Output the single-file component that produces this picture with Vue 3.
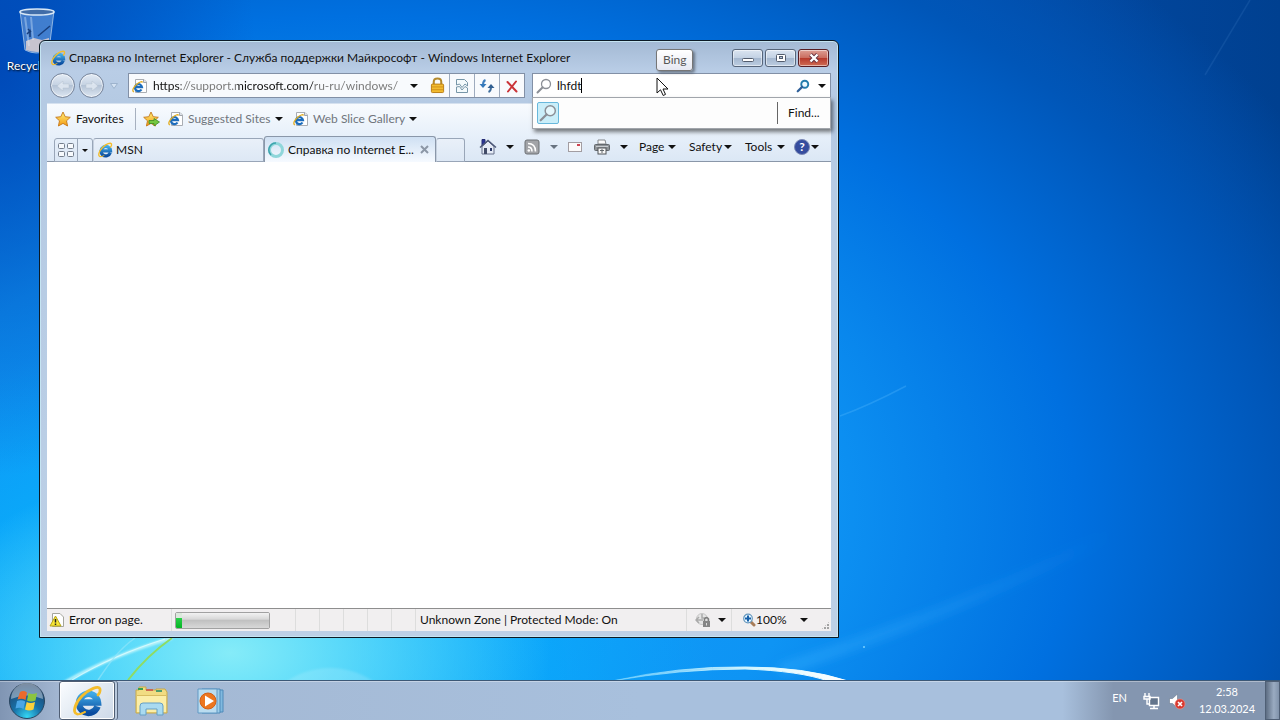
<script setup>
import { ref } from 'vue'

const address = ref('https://support.microsoft.com/ru-ru/windows/')
const query = ref('lhfdt')
const progress = ref(6)
const statusCells = 5
</script>

<template>
  <div class="screen">
    <svg class="defs" width="0" height="0" aria-hidden="true">
      <defs>
        <linearGradient id="eBlue" x1="0" y1="0" x2="0" y2="1">
          <stop offset="0" stop-color="#3fa9e6" />
          <stop offset="1" stop-color="#0a4c9f" />
        </linearGradient>
        <linearGradient id="gold" x1="0" y1="0" x2="0" y2="1">
          <stop offset="0" stop-color="#fff07a" />
          <stop offset="1" stop-color="#f39a12" />
        </linearGradient>
        <symbol id="ie" viewBox="0 0 32 32">
          <path d="M26.500 21.500A9.500 9.500 0 1 1 27 17.500H11" fill="none" stroke="url(#eBlue)" stroke-width="6.500" />
          <path d="M6 29C1 28 4 18 11 11C18 4 28 0 29 4C29.500 6 28 9 27 10" fill="none" stroke="#f4bd2c" stroke-width="2.800" stroke-linecap="round" />
          <path d="M6 29C9 30 12 28 14 27" fill="none" stroke="#f4bd2c" stroke-width="2" stroke-linecap="round" />
        </symbol>
        <symbol id="iepage" viewBox="0 0 16 16">
          <path d="M3.500 1.500H12L14.500 4V14.500H3.500Z" fill="#fff" stroke="#a9adb3" />
          <path d="M11.500 1.500V4.500H14.500" fill="#dde2ea" stroke="#a0a5ad" />
          <path d="M9.500 11.500A3.500 3.500 0 1 1 10 9.200H4" fill="none" stroke="#1c6cbc" stroke-width="2.200" />
          <path d="M2 14C-.5 13 1.500 9 4.500 6.500C7 4 10 3 10.500 4.500" fill="none" stroke="#e2ae25" stroke-width="1.300" />
        </symbol>
        <symbol id="star" viewBox="0 0 16 16">
          <path d="M8 1L10.200 5.700L15.300 6.300L11.500 9.800L12.600 15L8 12.400L3.400 15L4.500 9.800L.700 6.300L5.800 5.700Z" fill="url(#gold)" stroke="#c4771a" stroke-width=".9" />
        </symbol>
        <symbol id="lens" viewBox="0 0 16 16">
          <circle cx="10" cy="6" r="4.500" fill="#fff" fill-opacity=".5" stroke="currentColor" stroke-width="1.300" />
          <path d="M6.700 9.300L1.500 14.500" stroke="currentColor" stroke-width="2" stroke-linecap="round" />
        </symbol>
      </defs>
    </svg>

    <main class="desktop">
      <svg class="streaks" viewBox="0 0 1280 680" preserveAspectRatio="none" aria-hidden="true">
        <defs>
          <filter id="soft"><feGaussianBlur stdDeviation="1.200" /></filter>
          <filter id="wide"><feGaussianBlur stdDeviation="4" /></filter>
          <linearGradient id="beam" x1="0" y1="0" x2="1" y2="0">
            <stop offset="0" stop-color="#3ab0ff" stop-opacity=".4" />
            <stop offset="1" stop-color="#3ab0ff" stop-opacity="0" />
          </linearGradient>
          <linearGradient id="arc" x1="0" y1="0" x2="1" y2="0">
            <stop offset="0" stop-color="#9fe6ff" stop-opacity=".4" />
            <stop offset=".6" stop-color="#d6f6ff" />
            <stop offset="1" stop-color="#fff" />
          </linearGradient>
        </defs>
        <path d="M780 670C900 630 1000 590 1110 535" fill="none" stroke="url(#beam)" stroke-width="12" filter="url(#wide)" />
        <path d="M840 416C865 407 885 397 906 386" fill="none" stroke="#5dbcff" stroke-opacity=".3" stroke-width="1.500" />
        <path d="M1205 75L1250 0" stroke="#5d9ce0" stroke-opacity=".15" stroke-width="1.500" />
        <path d="M612 681Q680 666 745 667Q805 667 848 681H828Q800 671 745 669Q680 669 612 681Z" fill="url(#arc)" stroke="url(#arc)" stroke-width="1" />
        <path d="M65 682C95 665 130 650 172 638" fill="none" stroke="#c8f7fb" stroke-width="2.500" filter="url(#soft)" />
        <path d="M72 680C100 663 130 650 165 639" fill="none" stroke="#e8ffff" stroke-opacity=".7" stroke-width="1.200" />
        <path d="M98 680C108 665 118 650 135 638" fill="none" stroke="#8fe4fa" stroke-opacity=".7" stroke-width="1.500" />
        <path d="M128 680C142 662 155 650 172 638" fill="none" stroke="#8fdc62" stroke-width="2" />
        <ellipse cx="330" cy="730" rx="70" ry="62" fill="#fff" fill-opacity=".14" filter="url(#soft)" />
        <circle cx="864" cy="647" r="1" fill="#7ad0ff" />
      </svg>

      <a class="bin" href="#recycle">
        <svg width="38" height="46" viewBox="0 0 38 46" aria-hidden="true">
          <path d="M2 3L7 42Q18 48 31 42L36 3Z" fill="#9fc2e8" fill-opacity=".4" stroke="#bcd5ee" stroke-opacity=".7" />
          <path d="M8 33L16 30L24 32L31 30L30 42Q19 46 8 42Z" fill="#e9d5d0" fill-opacity=".8" />
          <ellipse cx="19" cy="4" rx="17" ry="3" fill="#416da8" stroke="#d8e8f6" stroke-width="1.500" />
          <path d="M7 9L11 38M13 9L15 32" stroke="#e6f3ff" stroke-opacity=".35" stroke-width="2" />
          <path d="M12 29V23L9 26M10 21L13 24M20 28L32 18" fill="none" stroke="#173e7c" stroke-width="1.500" />
        </svg>
        <span>Recycle Bin</span>
      </a>

      <section class="window" aria-label="Windows Internet Explorer">
        <header class="titlebar">
          <svg width="16" height="16" aria-hidden="true"><use href="#ie" /></svg>
          <h1>Справка по Internet Explorer - Служба поддержки Майкрософт - Windows Internet Explorer</h1>
          <div class="winbtns">
            <button type="button" aria-label="Minimize">
              <svg width="14" height="12" aria-hidden="true"><rect x="1.500" y="6.500" width="11" height="3" rx="1" fill="#fff" stroke="#525c6d" /></svg>
            </button>
            <button type="button" aria-label="Maximize">
              <svg width="14" height="12" aria-hidden="true"><rect x="2.500" y="2.500" width="9" height="7" rx="1" fill="#fff" stroke="#525c6d" /><rect x="5.500" y="4.500" width="3" height="2" fill="#b7c7dc" stroke="#525c6d" /></svg>
            </button>
            <button type="button" class="close" aria-label="Close">
              <svg width="14" height="12" aria-hidden="true"><path d="M3.500 2.500L10.500 9.500M10.500 2.500L3.500 9.500" stroke="#603040" stroke-width="4" /><path d="M3.500 2.500L10.500 9.500M10.500 2.500L3.500 9.500" stroke="#fff" stroke-width="2.400" /></svg>
            </button>
          </div>
          <div class="tooltip" role="tooltip">Bing</div>
        </header>

        <nav class="navrow">
          <div class="travel">
            <button type="button" class="orb" aria-label="Back">
              <svg width="16" height="16" viewBox="0 0 16 16" aria-hidden="true"><path d="M2 8L8 3V6H14V10H8V13Z" fill="#e4ebf4" fill-opacity=".8" stroke="#b4c0cf" stroke-width=".5" /></svg>
            </button>
            <button type="button" class="orb" aria-label="Forward">
              <svg width="16" height="16" viewBox="0 0 16 16" aria-hidden="true"><path d="M14 8L8 3V6H2V10H8V13Z" fill="#e4ebf4" fill-opacity=".8" stroke="#b4c0cf" stroke-width=".5" /></svg>
            </button>
            <button type="button" class="recent" aria-label="Recent pages">
              <svg width="10" height="8" aria-hidden="true"><path d="M1.500 1.500H8.500L5 6.500Z" fill="#d5e3f3" stroke="#9db3cd" /></svg>
            </button>
          </div>
          <div class="address">
            <svg width="16" height="16" aria-hidden="true"><use href="#iepage" /></svg>
            <input v-model="address" type="text" aria-label="Address">
            <button type="button" class="drop" aria-label="Address history"><i class="caret"></i></button>
            <button type="button" class="lock" aria-label="Security report">
              <svg width="15" height="17" viewBox="0 0 16 18" aria-hidden="true"><path d="M4 8V5Q4 1.500 8 1.500Q12 1.500 12 5V8" fill="none" stroke="#b48a2c" stroke-width="2.200" /><rect x="1.500" y="7.500" width="13" height="9" rx="1" fill="#f2bc31" stroke="#b97b12" /><path d="M2 10.500H14M2 13.500H14" stroke="#cf8f1b" /></svg>
            </button>
            <button type="button" class="cell" aria-label="Compatibility view">
              <svg width="14" height="16" viewBox="0 0 14 16" aria-hidden="true"><path d="M1.500 7V1.500H9.500L12.500 4.500V8L10 6L7 9.500L4.500 6Z" fill="#f4fafc" stroke="#7796a8" /><path d="M1.500 9L4.500 8.500L7 12L10 8.500L12.500 10V14.500H1.500Z" fill="#f4fafc" stroke="#7796a8" /></svg>
            </button>
            <button type="button" class="cell" aria-label="Refresh">
              <svg width="16" height="16" viewBox="0 0 16 16" aria-hidden="true"><path d="M6.500 2Q4 3 4 7" fill="none" stroke="#3f7fbe" stroke-width="2" /><path d="M.5 6H7.500L4 10Z" fill="#3478ba" /><path d="M9.500 14Q12 13 12 9" fill="none" stroke="#3d6c9c" stroke-width="2" /><path d="M8.500 10H15.500L12 6Z" fill="#315f91" /></svg>
            </button>
            <button type="button" class="cell" aria-label="Stop">
              <svg width="14" height="14" viewBox="0 0 14 14" aria-hidden="true"><path d="M2.500 3L11.500 12.500M11 2.500L3 12.500" stroke="#ca3338" stroke-width="2" stroke-linecap="round" /></svg>
            </button>
          </div>
          <div class="search">
            <svg class="gray" width="16" height="18" viewBox="0 0 16 16" aria-hidden="true"><use href="#lens" /></svg>
            <input v-model="query" type="text" aria-label="Search Bing"><span class="beam"></span>
            <button type="button" class="go" aria-label="Search"><svg width="14" height="14" viewBox="0 0 16 16" aria-hidden="true"><circle cx="10" cy="6" r="4" fill="#eefaff" stroke="#237cac" stroke-width="2.200" /><path d="M7 9L2 14" stroke="#2e5f99" stroke-width="2.500" stroke-linecap="round" /></svg></button>
            <button type="button" class="drop" aria-label="Search options"><i class="caret"></i></button>
            <div class="suggest">
              <button type="button" class="provider" aria-label="Bing"><svg width="18" height="18" viewBox="0 0 16 16" aria-hidden="true"><use href="#lens" /></svg></button>
              <button type="button" class="find">Find...</button>
            </div>
          </div>
        </nav>

        <div class="favorites">
          <button type="button" class="favmain"><svg width="16" height="16" aria-hidden="true"><use href="#star" /></svg>Favorites</button>
          <button type="button" class="addfav" aria-label="Add to Favorites Bar">
            <svg width="18" height="16" viewBox="0 0 18 16" aria-hidden="true"><use href="#star" width="16" height="16" /><path d="M6 9.500H11V7.500L16.500 11L11 15V12.500H6Z" fill="#74c840" stroke="#3b8c25" stroke-width=".8" /></svg>
          </button>
          <button type="button" class="slice sites"><svg width="16" height="16" aria-hidden="true"><use href="#iepage" /></svg>Suggested Sites<i class="caret"></i></button>
          <button type="button" class="slice"><svg width="16" height="16" aria-hidden="true"><use href="#iepage" /></svg>Web Slice Gallery<i class="caret"></i></button>
        </div>

        <div class="tabrow">
          <div class="quick">
            <button type="button" aria-label="Quick Tabs"><svg width="16" height="14" aria-hidden="true"><g fill="#f7fafd" stroke="#747e8c"><rect x=".5" y=".5" width="6" height="5" rx="1" /><rect x="9.500" y=".5" width="6" height="5" rx="1" /><rect x=".5" y="8.500" width="6" height="5" rx="1" /><rect x="9.500" y="8.500" width="6" height="5" rx="1" /></g></svg></button>
            <button type="button" aria-label="Tab list"><i class="caret small"></i></button>
          </div>
          <button type="button" class="tab"><svg width="16" height="16" aria-hidden="true"><use href="#ie" /></svg>MSN</button>
          <div class="tab active">
            <svg width="18" height="18" viewBox="0 0 18 18" aria-hidden="true"><circle cx="9" cy="9" r="6.500" fill="none" stroke="#8fd6da" stroke-width="3" /><path d="M9 2A7 7 0 0 0 4 14" fill="none" stroke="#3da3ad" stroke-width="1.500" /></svg>
            <button type="button" class="label">Справка по Internet E...</button>
            <button type="button" class="x" aria-label="Close tab"><svg width="9" height="9" aria-hidden="true"><path d="M1 1L8 8M8 1L1 8" stroke="#8c97a6" stroke-width="2" /></svg></button>
          </div>
          <button type="button" class="tab newtab" aria-label="New tab"></button>
          <div class="commands">
            <button type="button" class="icon wide" aria-label="Home">
              <svg width="18" height="18" viewBox="0 0 18 18" aria-hidden="true"><path d="M3 1.500H6V6L3 8Z" fill="#2a3596" stroke="#252c74" /><path d="M3 8.500L9 3L15 8.500V16H3Z" fill="#e5ebf6" stroke="#66708a" /><path d="M1 9.500L9 2.500L17 9.500" fill="none" stroke="#4d5878" stroke-width="1.500" /><rect x="5" y="10" width="3" height="6" fill="#414b67" /><rect x="11" y="10" width="2" height="3" fill="#2b3967" /></svg>
              <i class="caret"></i>
            </button>
            <button type="button" class="icon feed" aria-label="Feeds">
              <svg width="16" height="16" viewBox="0 0 16 16" aria-hidden="true"><rect x="1" y="1" width="14" height="14" rx="2" fill="#a2a4a8" stroke="#6d7074" /><path d="M4 8Q8 8 8 12.500M4 4.500Q11.500 4.500 11.500 12.500" fill="none" stroke="#fff" stroke-width="1.600" /><circle cx="4.800" cy="11.500" r="1.300" fill="#fff" /></svg>
              <i class="caret"></i>
            </button>
            <button type="button" class="icon mail" aria-label="Read mail">
              <svg width="16" height="12" aria-hidden="true"><rect x="1.500" y="1.500" width="13" height="9" fill="#fbfafa" stroke="#a29da2" /><rect x="10" y="3" width="3" height="2" fill="#ce4552" /></svg>
            </button>
            <button type="button" class="icon print" aria-label="Print">
              <svg width="18" height="16" viewBox="0 0 18 16" aria-hidden="true"><path d="M5 1H12L13 5H5Z" fill="#fafafa" stroke="#83878b" /><rect x="1.500" y="5.500" width="15" height="6" rx="1" fill="#8e9397" stroke="#63686d" /><path d="M3 7.500H15" stroke="#c8ccd0" /><rect x="5" y="9" width="8" height="6" fill="#f8f8f8" stroke="#505459" /><path d="M7 11.500H11M9 10V14" stroke="#63686d" /></svg>
              <i class="caret"></i>
            </button>
            <button type="button" class="menu page">Page<i class="caret"></i></button>
            <button type="button" class="menu safety">Safety<i class="caret"></i></button>
            <button type="button" class="menu tools">Tools<i class="caret"></i></button>
            <button type="button" class="menu help" aria-label="Help"><span>?</span><i class="caret"></i></button>
          </div>
        </div>

        <div class="content"></div>

        <footer class="status">
          <div class="error">
            <svg width="16" height="16" viewBox="0 0 16 16" aria-hidden="true"><path d="M3.500 1.500H11L14.500 5V14.500H3.500Z" fill="#fff" stroke="#a5a59c" /><path d="M6.500 4L12 14H1Z" fill="#f8e634" stroke="#b5a51c" stroke-linejoin="round" /><path d="M6.500 7V10.500M6.500 11.500V13" stroke="#222" stroke-width="1.500" /></svg>
            Error on page.
          </div>
          <div class="meter"><progress :value="progress" max="93" aria-label="Page loading"></progress></div>
          <div v-for="n in statusCells" :key="n" class="pane"></div>
          <div class="zone">Unknown Zone | Protected Mode: On</div>
          <button type="button" class="privacy" aria-label="Security settings">
            <svg width="18" height="16" viewBox="0 0 18 16" aria-hidden="true"><circle cx="7" cy="7" r="5.500" fill="#e5e5e5" stroke="#c6c6c6" /><path d="M1 8H8M4 5L1 8L4 11M7 2V6H12" fill="none" stroke="#aaa" stroke-width="1.500" /><path d="M9.500 9V7Q11.500 4 13.500 7V9" fill="none" stroke="#7e7e7e" stroke-width="1.500" /><rect x="8" y="9" width="7" height="6" fill="#858585" /><path d="M11.500 11V13.500" stroke="#ddd" /></svg>
            <i class="caret"></i>
          </button>
          <button type="button" class="zoom">
            <svg width="14" height="14" viewBox="0 0 14 14" aria-hidden="true"><path d="M8.500 8.500L12 12" stroke="#a77c58" stroke-width="3" stroke-linecap="round" /><circle cx="6" cy="5.500" r="4.300" fill="#e9f7ff" stroke="#6597bd" stroke-width="1.200" /><path d="M3 5.500H9M6 2.500V8.500" stroke="#155fa9" stroke-width="2" /></svg>
            <span>100%</span><i class="caret"></i>
          </button>
          <div class="grip"></div>
        </footer>
      </section>

      <svg class="pointer" width="14" height="20" viewBox="0 0 14 20" aria-hidden="true"><path d="M1 1V16L4.500 12.800L7.200 18.500L9.500 17.400L7 12H12Z" fill="#fff" stroke="#111" /></svg>
    </main>

    <footer class="taskbar">
      <button type="button" class="start" aria-label="Start">
        <svg width="38" height="38" viewBox="0 0 38 38" aria-hidden="true">
          <defs>
            <radialGradient id="orbFill" cx=".5" cy=".95" r=".9"><stop offset="0" stop-color="#35d7f4" /><stop offset=".45" stop-color="#1771a8" /><stop offset="1" stop-color="#22436c" /></radialGradient>
          </defs>
          <circle cx="19" cy="19" r="17.500" fill="url(#orbFill)" stroke="#29455f" />
          <path d="M3 17A16 16 0 0 1 35 17Q19 10 3 17Z" fill="#fff" fill-opacity=".4" />
          <path d="M12 10Q15.500 8 19 10.500L17.500 18Q14 16 9.500 17.500Z" fill="#ec6a2b" />
          <path d="M20.500 11Q24 13 29 11L27.500 18.500Q23 20.500 19 18.500Z" fill="#8bc53f" />
          <path d="M9 19Q13.500 17.500 17.200 19.500L15.500 27Q12 25 7.500 26.500Z" fill="#4aa6e6" />
          <path d="M18.700 20Q22.500 22 27 20L25.500 27.500Q21 29.500 17 27.500Z" fill="#fbd13b" />
        </svg>
      </button>
      <button type="button" class="app running" aria-label="Internet Explorer"><svg width="32" height="32" aria-hidden="true"><use href="#ie" /></svg></button>
      <button type="button" class="app" aria-label="Windows Explorer">
        <svg width="34" height="30" viewBox="0 0 34 30" aria-hidden="true"><path d="M2 4H5V1H12V4H22V3H31L33 6V27H2Z" fill="#f1dc82" stroke="#c7a94a" /><path d="M4 2H9V4H4Z" fill="#39a04f" /><path d="M12 4H19" stroke="#cc6850" stroke-width="2" /><path d="M22 5H28" stroke="#4f9d6d" stroke-width="2" /><path d="M3 10H32V26H3Z" fill="#fbeea8" /><path d="M3 9.500H32" stroke="#d9bd60" /><path d="M6 29V20Q6 17 9 17H26Q29 17 29 20V29H23V23H12V29Z" fill="#a9daf0" stroke="#659fc5" /></svg>
      </button>
      <button type="button" class="app" aria-label="Windows Media Player">
        <svg width="30" height="28" viewBox="0 0 30 28" aria-hidden="true"><path d="M9 3H27V25H9Z" fill="#80b9df" stroke="#4e8ab9" /><path d="M6 2H24V26H6Z" fill="#9dcdea" stroke="#4e8ab9" /><path d="M2 2H21V26H2Z" fill="#badcf0" stroke="#6199c4" /><circle cx="12" cy="14" r="8" fill="#ec7620" stroke="#d46016" /><path d="M9 8.500L18 14L9 19.500Z" fill="#fff" /></svg>
      </button>
      <div class="tray">
        <button type="button" class="lang">EN</button>
        <button type="button" aria-label="Network"><svg width="18" height="18" viewBox="0 0 18 18" aria-hidden="true"><path d="M6.500 5.500H15.500V13.500H6.500Z" fill="#63758c" stroke="#fff" stroke-width="1.400" /><path d="M11 14V16M7 16.500H15" stroke="#fff" stroke-width="1.500" /><path d="M2 1V4M6 1V4M1 4.500H7V7H1ZM4 7V12H6" fill="none" stroke="#fff" stroke-width="1.400" /></svg></button>
        <button type="button" aria-label="Volume muted"><svg width="18" height="18" viewBox="0 0 18 18" aria-hidden="true"><path d="M1.500 6.500H4.500L9.500 2V16L4.500 11.500H1.500Z" fill="#fff" stroke="#69798f" stroke-width=".6" /><circle cx="12" cy="12" r="5" fill="#d8392f" stroke="#f0938a" stroke-width=".6" /><path d="M10 10L14 14M14 10L10 14" stroke="#fff" stroke-width="1.600" /></svg></button>
        <button type="button" class="clock"><time>2:58</time><time>12.03.2024</time></button>
      </div>
      <button type="button" class="peek" aria-label="Show desktop"></button>
    </footer>
  </div>
</template>

<style>
body { margin: 0; }
</style>

<style scoped>
.screen {
  display: flex;
  flex-direction: column;
  height: 100vh;
  overflow: hidden;
  font: 12px/16px Lato, "Open Sans", sans-serif;
  color: #111;
}
.screen *, .screen *::before { box-sizing: border-box; }
.defs { position: absolute; }
svg { flex: none; }
button, input {
  margin: 0;
  padding: 0;
  border: 0;
  background: none;
  font: inherit;
  color: inherit;
}
button { display: flex; align-items: center; white-space: nowrap; }
.caret {
  flex: none;
  width: 0;
  height: 0;
  border: 4px solid transparent;
  border-top-color: currentColor;
  border-bottom: 0;
}
.caret.small { border-width: 3px 3px 0; }

.desktop {
  position: relative;
  flex: 1;
  min-height: 0;
  overflow: hidden;
  background:
    radial-gradient(ellipse 25% 28% at 18% 96%, rgba(140, 238, 248, .95), transparent),
    radial-gradient(ellipse 20% 60% at 0 10%, rgba(0, 70, 180, .9), transparent),
    radial-gradient(ellipse 40% 50% at 16% 100%, rgba(0, 200, 255, .8), transparent),
    radial-gradient(ellipse 85% 110% at 28% 75%, #12a2ff 0%, #0e94f4 42%, #0070e0 66%, #0056b8 85%, transparent 100%),
    linear-gradient(90deg, #0544b0, #0553b8 60%, #004090);
}
.streaks { position: absolute; inset: 0; width: 100%; height: 100%; }
.bin {
  position: absolute;
  left: 0;
  top: 8px;
  width: 74px;
  display: flex;
  flex-direction: column;
  align-items: center;
  gap: 4px;
  color: #fff;
  text-decoration: none;
  text-shadow: 1px 1px 2px #000;
}

.window {
  position: absolute;
  left: 39px;
  top: 40px;
  bottom: 42px;
  width: 62.5%;
  display: flex;
  flex-direction: column;
  padding: 1px 7px 6px;
  border: 1px solid #0b1a26;
  border-radius: 6px 6px 0 0;
  background: linear-gradient(#a3b9d4, #b9cde6 30px, #b5cae3 60px, #bdd0e6);
  box-shadow: inset 0 0 0 1px #c5e4f2;
}
.titlebar {
  position: relative;
  display: flex;
  align-items: center;
  height: 31px;
  padding: 0 2px 0 3px;
}
.titlebar h1 {
  flex: 1;
  margin: 0 0 0 3px;
  overflow: hidden;
  white-space: nowrap;
  font-size: 12px;
  font-weight: 400;
}
.winbtns { display: flex; gap: 2px; }
.winbtns button {
  justify-content: center;
  width: 31px;
  height: 18px;
  border: 1px solid #56657a;
  border-radius: 3px;
  background: linear-gradient(#dbe5f1, #c3d2e4 48%, #a4b7cf 50%, #bccde1);
  box-shadow: inset 0 0 0 1px rgba(255, 255, 255, .5);
}
.winbtns .close {
  border-color: #571d24;
  background: linear-gradient(#dd9e94, #cb6d60 48%, #b6372a 50%, #cf6d55);
}
.tooltip {
  position: absolute;
  z-index: 4;
  left: 609px;
  top: 7px;
  padding: 2px 6px;
  border: 1px solid #767676;
  border-radius: 3px;
  background: linear-gradient(#fff, #e6e8f2);
  box-shadow: 2px 2px 3px rgba(0, 0, 0, .4);
  color: #575757;
}

.navrow { display: flex; height: 25px; }
.travel { display: flex; align-items: center; gap: 4px; width: 81px; padding-left: 3px; }
.orb {
  justify-content: center;
  width: 25px;
  height: 25px;
  border: 1px solid #75839a;
  border-radius: 50%;
  background: linear-gradient(#e3ebf5, #c5d2e2 48%, #b4c3d6 50%, #dce6f1);
  box-shadow: inset 0 0 0 1px rgba(255, 255, 255, .6);
}
.recent { padding-left: 1px; }
.address {
  flex: 4 1 0;
  min-width: 0;
  display: flex;
  align-items: center;
  padding-left: 3px;
  border: 1px solid #8290a6;
  background: #f8fafd;
}
.address input {
  flex: 1;
  min-width: 0;
  margin-left: 5px;
  outline: 0;
  background: linear-gradient(90deg, #111 28px, #777 28px 84px, #111 84px 160px, #777 160px);
  background-clip: text;
  -webkit-text-fill-color: transparent;
}
.drop { justify-content: center; width: 20px; height: 100%; }
.address .drop { width: 22px; }
.lock { justify-content: center; width: 24px; }
.cell { justify-content: center; width: 25px; height: 100%; border-left: 1px solid #9eabbe; }
.search {
  position: relative;
  flex: 3 1 0;
  min-width: 0;
  display: flex;
  align-items: center;
  margin-left: 7px;
  padding-left: 3px;
  border: 1px solid #8290a6;
  background: #fff;
}
.gray, .provider { color: #8b8f96; }
.search input { field-sizing: content; margin-left: 5px; outline: 0; }
.beam { width: 1px; height: 15px; background: #000; }
.go { margin-left: auto; padding-right: 4px; }
.search .drop { width: 16px; }
.suggest {
  position: absolute;
  z-index: 3;
  top: 23px;
  left: -1px;
  right: -1px;
  display: flex;
  align-items: center;
  height: 32px;
  padding: 4px;
  border: 1px solid #a1a5ab;
  background: #fdfdfd;
  box-shadow: 2px 3px 4px rgba(0, 0, 0, .5);
}
.provider {
  justify-content: center;
  width: 22px;
  height: 22px;
  border: 1px solid #68b8dc;
  border-radius: 2px;
  background: #caeef9;
}
.find { margin-left: auto; width: 49px; height: 22px; padding-left: 10px; border-left: 1px solid #666; }

.favorites {
  display: flex;
  align-items: center;
  height: 32px;
  margin-top: 5px;
  padding: 0 0 2px 8px;
  background: linear-gradient(#f8fbfe, #e7f0fa);
  border-top: 1px solid #d5e1ef;
}
.favmain { gap: 5px; width: 81px; height: 22px; border-right: 1px solid #a6b0bf; }
.addfav { margin: 0 7px; }
.slice { gap: 4px; color: #70757c; }
.slice .caret { border-top-color: #111; }
.sites { width: 125px; }

.tabrow {
  display: flex;
  align-items: flex-end;
  height: 27px;
  padding-left: 7px;
  background: linear-gradient(#e7f0fa, #dbe7f5);
  box-shadow: inset 0 -1px #8a97a9;
}
.quick { display: flex; width: 39px; height: 24px; border: 1px solid #99a6b8; border-radius: 3px 3px 0 0; }
.quick button { flex: 15 1 0; justify-content: center; }
.quick button:first-child { flex: 23 1 0; border-right: 1px solid #99a6b8; }
.tab {
  gap: 3px;
  width: 171px;
  height: 24px;
  padding-left: 3px;
  border: 1px solid #99a6b8;
  border-left-color: #c5d0de;
  border-radius: 3px 3px 0 0;
  background: linear-gradient(#e9f0f9, #dde8f5);
}
.tab.active {
  display: flex;
  align-items: center;
  width: 172px;
  height: 26px;
  padding-left: 2px;
  border-color: #8a97a9;
  border-bottom: 0;
  background: linear-gradient(#cfe0f3, #f6faff);
}
.label { flex: 1; min-width: 0; }
.x { padding-right: 6px; }
.tab.newtab { width: 29px; }
.commands { display: flex; align-items: center; height: 26px; padding: 0 0 4px 14px; }
.icon { gap: 9px; }
.wide { width: 45px; }
.feed { gap: 10px; width: 43px; color: #687380; }
.mail { width: 26px; }
.print { width: 46px; }
.menu { justify-content: space-between; }
.page { width: 37px; }
.safety { width: 43px; margin-left: 13px; }
.tools { width: 40px; margin-left: 13px; }
.help { width: 25px; margin-left: 9px; }
.help span {
  width: 16px;
  height: 16px;
  border: 1px solid #7c89b6;
  border-radius: 50%;
  background: #354c9e;
  color: #fff;
  font-weight: 700;
  line-height: 14px;
}

.content { flex: 1; background: #fff; }
.status {
  position: relative;
  display: flex;
  align-items: stretch;
  height: 23px;
  border-top: 1px solid #8e8e8e;
  background: #f1eff0;
}
.error { display: flex; align-items: center; gap: 4px; width: 125px; padding-left: 2px; border-right: 1px solid #ddd; }
.meter { width: 124px; padding: 3px; border-right: 1px solid #ddd; }
progress {
  display: block;
  appearance: none;
  width: 95px;
  height: 17px;
  border: 1px solid #a1a1a1;
  border-radius: 2px;
  overflow: hidden;
}
progress::-webkit-progress-bar { background: linear-gradient(#f2f2f2, #d9d9d9 40%, #c1c1c1 50%, #d8d8d8); }
progress::-webkit-progress-value { background: linear-gradient(#dbe9dc 30%, #2bd04a 32%, #05b525); }
.pane { width: 24px; border-right: 1px solid #ddd; }
.zone { flex: 1; display: flex; align-items: center; padding-left: 4px; }
.privacy, .zoom { border-left: 1px solid #ddd; }
.privacy { gap: 5px; width: 45px; padding-left: 8px; }
.zoom { width: 100px; padding-left: 10px; }
.zoom span { flex: none; width: 44px; text-align: left; }
.grip {
  position: absolute;
  right: 1px;
  bottom: 1px;
  width: 9px;
  height: 9px;
  background: radial-gradient(circle at 1px 1px, #a3a3a3 1px, transparent 1px) 0 0 / 3px 3px;
  clip-path: polygon(100% 0, 100% 100%, 0 100%);
}
.pointer { position: absolute; z-index: 5; left: 656px; top: 77px; }

.taskbar {
  display: flex;
  align-items: stretch;
  height: 40px;
  border-top: 1px solid #3c5876;
  background: linear-gradient(90deg, #8095b3, #a3b7d2 60px, #a8c0dd 50%, #a8c0dd 83%, #8496b0 87%, #8496b0);
  box-shadow: inset 0 1px rgba(255, 255, 255, .35);
}
.start { justify-content: center; width: 54px; margin-right: 5px; }
.app { justify-content: center; width: 60px; }
.running {
  width: 56px;
  margin-right: 6px;
  border: 1px solid #4f5e73;
  border-radius: 3px;
  background: linear-gradient(135deg, #fbfdff, #dde6f0 60%, #cdd9e8);
  box-shadow: inset 0 0 0 1px #fff, 2px 0 #b9c9dd, 3px 0 #586a82;
}
.tray { display: flex; align-items: center; gap: 7px; margin-left: auto; color: #fff; font-size: 11px; }
.lang { padding: 0 9px 6px 0; }
.tray button:nth-child(3) { margin-right: -4px; }
.clock { flex-direction: column; justify-content: center; width: 76px; }
.clock time:first-child { margin-bottom: 1px; }
.peek { width: 15px; border: 1px solid #4f5f75; background: linear-gradient(90deg, #5d6d83, #9aabc1 60%, #8092aa); }
</style>
